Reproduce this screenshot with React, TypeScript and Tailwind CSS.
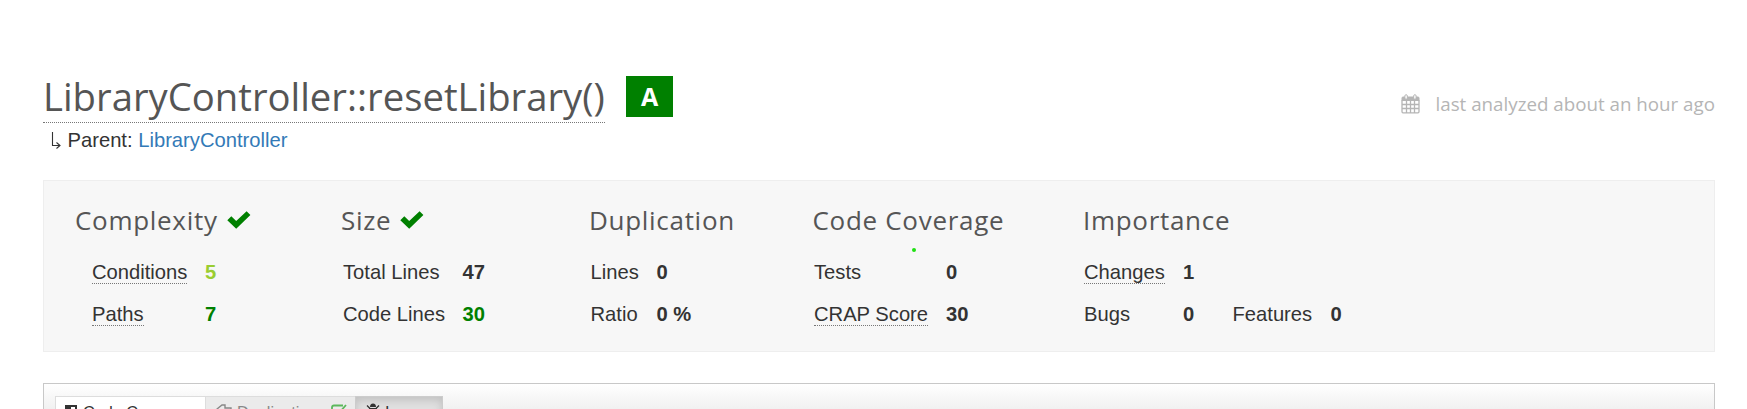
import React from "react";

const dotted = "border-b border-dotted border-[#777]";

function Check() {
  return (
    <svg className="ml-[9px] h-[18px] w-6" viewBox="0 0 24 18" fill="#008000">
      <path d="M0.3 9.2 4.3 5.3 9.2 10 19.6 0.3 23.4 4 9.2 17.7z" />
    </svg>
  );
}

function Calendar() {
  return (
    <svg className="h-5 w-[19px]" viewBox="0 0 19 20" fill="none" stroke="#b5b5b5">
      <path d="M1 6.5V4Q1 3 2 3H17Q18 3 18 4V6.5z" fill="#b5b5b5" />
      <path d="M1 6V17.5Q1 18.8 2 18.8H17Q18 18.8 18 17.5V6M1 10.5H18M1 14.5H18M5.5 6.5V18.5M9.5 6.5V18.5M13.5 6.5V18.5" strokeWidth="1.3" />
      <rect x="3.9" y="0.7" width="2.4" height="4.6" rx="1.2" fill="#fff" />
      <rect x="12.7" y="0.7" width="2.4" height="4.6" rx="1.2" fill="#fff" />
    </svg>
  );
}

function Heading({ children, check = false }: { children: React.ReactNode; check?: boolean }) {
  return (
    <h2 className="flex h-9 items-center font-['Open_Sans',sans-serif] text-[26px] leading-9 tracking-[0.7px] whitespace-nowrap text-[#555]">
      {children}
      {check && <Check />}
    </h2>
  );
}

function Label({ children, line = false, className }: { children: React.ReactNode; line?: boolean; className: string }) {
  return (
    <div className={className}>
      <span className={line ? `inline-block h-[23px] ${dotted}` : "inline-block h-[23px]"}>{children}</span>
    </div>
  );
}

export default function App() {
  return (
    <div className="h-[409px] overflow-hidden bg-white px-[43px] pr-8 font-['Liberation_Sans',Arial,sans-serif] text-[20.2px] leading-[23px] text-[#333]">
      <header className="flex h-[123px] items-start justify-between pt-[70px] font-['Open_Sans',sans-serif]">
        <div className="flex">
          <h1 className={`h-[53px] w-[562px] text-[38.25px] leading-[52px] whitespace-nowrap text-[#555] ${dotted}`}>
            LibraryController::resetLibrary()
          </h1>
          <div className="mt-1.5 ml-[21px] flex h-[41px] w-[47px] items-center justify-center bg-[#008000] text-[25px] leading-none font-bold text-white">
            A
          </div>
        </div>
        <div className="mt-[21px] flex text-[18.75px] leading-[26px] whitespace-nowrap text-[#b5b5b5]">
          <span className="mt-[3px] mr-[15.5px]"><Calendar /></span>
          last analyzed about an hour ago
        </div>
      </header>

      <div className="flex h-[57px] pt-[5px] pl-[8px] leading-6">
        <svg className="mt-[3px] mr-[6.5px] h-[18px] w-[10px]" viewBox="0 0 10 18" fill="none" stroke="#333" strokeWidth="1.1">
          <path d="M1.5 1V14.5H9M5.5 11.5 9 14.5 5.5 17.5" />
        </svg>
        <span>Parent: <a className="text-[#337ab7]">LibraryController</a></span>
      </div>

      <section className="flex h-[172px] w-[1672px] border border-[#eee] bg-[#f7f7f7] pt-[21px] pl-[31px]">
        <div className="w-[266px]">
          <Heading check>Complexity</Heading>
          <div className="mt-[23px] flex pl-[17px]"><Label line className="w-[113px]">Conditions</Label><b className="text-[#9acd32]">5</b></div>
          <div className="mt-[19px] flex pl-[17px]"><Label line className="w-[113px]">Paths</Label><b className="text-[#008000]">7</b></div>
        </div>
        <div className="w-[248px]">
          <Heading check>Size</Heading>
          <div className="mt-[23px] flex pl-[2px]"><Label className="w-[119.5px]">Total Lines</Label><b>47</b></div>
          <div className="mt-[19px] flex pl-[2px]"><Label className="w-[119.5px]">Code Lines</Label><b className="text-[#008000]">30</b></div>
        </div>
        <div className="w-[223.5px]">
          <Heading>Duplication</Heading>
          <div className="mt-[23px] flex pl-[1.5px]"><Label className="w-[66px]">Lines</Label><b>0</b></div>
          <div className="mt-[19px] flex pl-[1.5px]"><Label className="w-[66px]">Ratio</Label><b>0 %</b></div>
        </div>
        <div className="relative w-[270.5px]">
          <Heading>Code Coverage</Heading>
          <span className="absolute top-[46px] left-[99px] size-1 rounded-full bg-[#1fe012]" />
          <div className="mt-[23px] flex pl-[1.5px]"><Label className="w-[132px]">Tests</Label><b>0</b></div>
          <div className="mt-[19px] flex pl-[1.5px]"><Label line className="w-[132px]">CRAP Score</Label><b>30</b></div>
        </div>
        <div className="whitespace-nowrap">
          <Heading>Importance</Heading>
          <div className="mt-[23px] flex pl-px"><Label line className="w-[99px]">Changes</Label><b>1</b></div>
          <div className="mt-[19px] flex pl-px"><Label className="w-[99px]">Bugs</Label><b className="w-[49.5px]">0</b><Label className="w-[98px]">Features</Label><b>0</b></div>
        </div>
      </section>

      <section className="mt-[31px] h-[60px] w-[1672px] border border-[#c8c8c8] bg-linear-to-b from-white to-[#dedede] pt-3 pl-[11px]">
        <div className="flex h-10 text-[16.25px] leading-[18px] whitespace-nowrap">
          <div className="flex w-[151px] border border-[#ddd] bg-white pt-[6px] pl-[9px]">
            <svg className="mt-[2px] mr-1.5 size-3" viewBox="0 0 12 12"><path d="M0 0H12V12H0z" fill="#333" /><path d="M6 2H10V10H6z" fill="#fff" /></svg>
            Code Coverage
          </div>
          <div className="flex w-[149px] border-t border-[#ddd] bg-[#ebebeb] pt-[6px] pl-[10px] text-[#888]">
            <svg className="mt-px mr-[5px] h-[14px] w-4" viewBox="0 0 16 14" fill="none" stroke="#888" strokeWidth="1.4"><path d="M1 5 6 1H9V4H15V9H9V13L1 7z" /></svg>
            Duplications
            <svg className="mt-px ml-[5px] h-[14px] w-4" viewBox="0 0 16 14" fill="none" stroke="#5cb85c" strokeWidth="1.8"><path d="M12 1.5H3Q1 1.5 1 3.5V11Q1 13 3 13H11Q13 13 13 11V8M5 6 8 9 15 1" /></svg>
          </div>
          <div className="flex w-[88px] border border-[#ccc] bg-[#e0e0e0] pt-[6px] pl-[10px] shadow-[inset_0_3px_8px_rgba(0,0,0,0.15)]">
            <svg className="mr-[5px] size-[14px]" viewBox="0 0 14 14" fill="#333"><path d="M4 4Q4 0.5 7 0.5T10 4z" /><path d="M3 5H11V10Q10 13 7 13T3 10z" /><path d="M0 8H14M1 2.5 4 5.5M13 2.5 10 5.5M1 13 4 10M13 13 10 10" stroke="#333" strokeWidth="1.3" /></svg>
            Issues
          </div>
        </div>
      </section>
    </div>
  );
}
